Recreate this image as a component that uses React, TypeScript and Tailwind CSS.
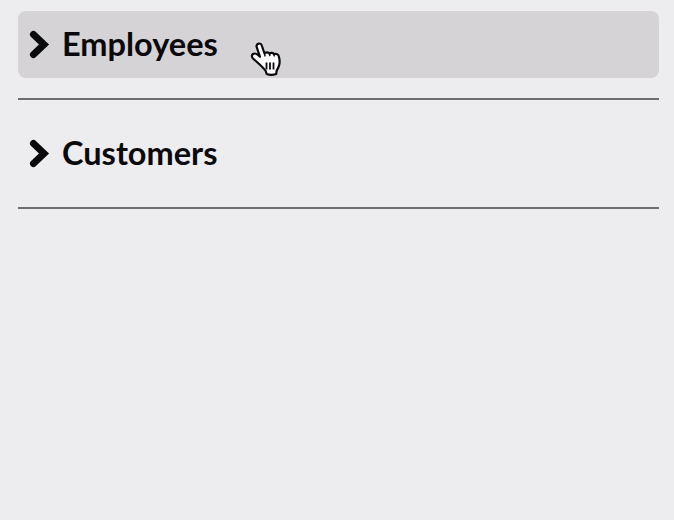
const rows = ['Employees', 'Customers'];

const Chevron = () => (
  <svg width="22" height="30" viewBox="0 0 22 30" fill="none" className="shrink-0">
    <path d="M5.500 4.500 L16 14.500 L5.500 24.500" stroke="#0a0a0c" strokeWidth="7" strokeLinecap="round" strokeLinejoin="miter" />
  </svg>
);

const HandCursor = () => (
  <svg width="34" height="37" viewBox="0 0 34 37" className="absolute left-[250px] top-[41px]">
    <path
      d="M6.500 5.500C6.500 2 11 1.500 11.800 4.500l2.700 8c1-1.500 4-1.500 5 .2 1.200-1.200 3.800-1 4.500.6 1.500-1 4-.5 4.700 1.700 1 3 1.200 6 .5 9-.6 2.500-1.600 4-2.500 5.500l-.5 3.500c-3 1-7 1-9.500 0l-1-3C13 26 7 21 3 17.500c-1.500-1.500-1.500-3.500 0-4.500 1.500-.9 3.500-.3 5 1l2 1.800z"
      fill="#ffffff"
      stroke="#0a0a0c"
      strokeWidth="2.200"
      strokeLinejoin="round"
    />
    <path d="M16.500 21.500v7M20 21.500v7M23.500 21.500v7" stroke="#0a0a0c" strokeWidth="1.800" fill="none" />
    <path d="M14.500 12.500l.6 3M19.500 12.700l.4 2.500M24 13.300l.3 2.200" stroke="#0a0a0c" strokeWidth="1.400" fill="none" />
  </svg>
);

export default function App() {
  return (
    <div className="relative h-[520px] w-[674px] overflow-hidden bg-[#edecef] pl-[18px] pr-[15px] pt-[11px] font-['Lato','Noto_Sans',sans-serif]">
      {rows.map((label, i) => (
        <div key={label} className="mb-5 h-[89px] border-b-2 border-[#6e6e70]">
          <div className={`flex h-[67px] items-center gap-[12px] rounded-lg pl-[10px] ${i === 0 ? 'bg-[#d5d3d6]' : 'mt-px'}`}>
            <Chevron />
            <span className="pb-px text-[32.500px] font-bold leading-none text-[#0a0a0c]">{label}</span>
          </div>
        </div>
      ))}
      <HandCursor />
    </div>
  );
}
